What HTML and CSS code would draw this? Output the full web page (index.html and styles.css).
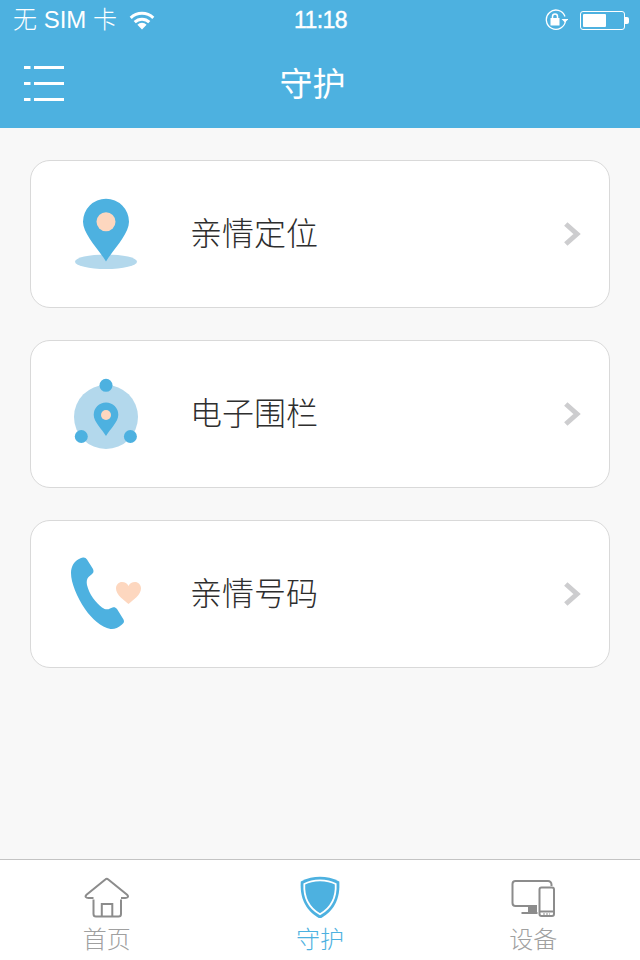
FILE: index.html
```html
<!DOCTYPE html>
<html lang="zh">
<head>
<meta charset="utf-8">
<title>守护</title>
<link rel="stylesheet" href="styles.css">
</head>
<body>
<div class="app">
  <header class="header">
    <div class="status">
      <div class="status-left">
        <span class="carrier">无 SIM 卡</span>
        <svg class="wifi" width="26" height="20" viewBox="130 10 26 20"><path d="M131.700 17.800a16.500 16.500 0 0 1 22.600 0" class="wifi-arc"/><path d="M135.700 22.200a10.500 10.500 0 0 1 14.600 0" class="wifi-arc"/><path d="M143 29.500l-4.600-4.800a6.500 6.500 0 0 1 9.200 0z" class="wifi-dot"/></svg>
      </div>
      <span class="time">11:18</span>
      <div class="status-right">
        <svg class="rot" width="24" height="22" viewBox="544 9 24 22"><path d="M565 16.500a9.600 9.600 0 1 0 .5 4" class="rot-arc"/><path d="M561.500 19h7l-3.500 3.500z" class="rot-fill"/><rect x="550.500" y="18" width="9" height="7.500" class="rot-fill"/><path d="M552.500 18.500v-2a2.500 2.500 0 0 1 5 0v2" class="rot-lock"/></svg>
        <div class="battery"><div class="battery-body"><div class="battery-fill"></div></div><div class="battery-nub"></div></div>
      </div>
    </div>
    <nav class="nav">
      <svg class="menu" width="40" height="35" viewBox="24 66 40 35"><rect x="24" y="66" width="6.500" height="3"/><rect x="34" y="66" width="30" height="3"/><rect x="24" y="82" width="6.500" height="3"/><rect x="34" y="82" width="30" height="3"/><rect x="24" y="98" width="6.500" height="3"/><rect x="34" y="98" width="30" height="3"/></svg>
      <h1 class="title">守护</h1>
    </nav>
  </header>

  <main class="list">
    <a class="card">
      <svg class="card-icon" width="90" height="146" viewBox="60 161 90 146">
        <ellipse cx="106" cy="261.700" rx="31" ry="7.300" class="c-pale"/>
        <path d="M106 261.500C99 250 83 234 83 221.800a23 23 0 0 1 46 0C129 234 113 250 106 261.500z" class="c-blue"/>
        <circle cx="106" cy="221.800" r="9.500" class="c-peach"/>
      </svg>
      <span class="card-label">亲情定位</span>
      <svg class="chev" width="18" height="26" viewBox="0 0 18 26"><path d="M2.800 3L14 13 2.800 23"/></svg>
    </a>
    <a class="card">
      <svg class="card-icon" width="90" height="146" viewBox="60 341 90 146">
        <circle cx="106" cy="417" r="32" class="c-pale"/>
        <circle cx="106" cy="385.300" r="6.500" class="c-blue"/>
        <circle cx="81.300" cy="436.500" r="6.500" class="c-blue"/>
        <circle cx="130.400" cy="436.500" r="6.500" class="c-blue"/>
        <path d="M106 436C102 429 93.700 422 93.700 414.700a12.300 12.300 0 0 1 24.600 0C118.300 422 110 429 106 436z" class="c-blue"/>
        <circle cx="106" cy="415" r="5" class="c-peach"/>
      </svg>
      <span class="card-label">电子围栏</span>
      <svg class="chev" width="18" height="26" viewBox="0 0 18 26"><path d="M2.800 3L14 13 2.800 23"/></svg>
    </a>
    <a class="card">
      <svg class="card-icon" width="90" height="146" viewBox="60 521 90 146">
        <path d="M80 558.500C84 556.500 85.500 557.500 87 559.500L93 569C94 571.500 93.500 573 91.500 574.500L88.500 577C86.500 579 86.500 582 87 585C89 594 96 603 102 607.500C105 609.500 107.500 610 110 608.500L112.500 607.500C114.500 607 115.500 607.500 117 609L123.500 619.500C124.500 621.500 124 623 122 624.500C118 628 114 629.500 110.500 629C101 627 92 619 85 609C77 597 71 583 71 573C71 566 74.500 561 80 558.500z" class="c-blue"/>
        <path d="M128.500 604C124 600 116 595 116 588.500C116 584.500 119 582 122 582C125 582 127.300 583.500 128.500 586C129.700 583.500 132 582 135 582C138 582 141 584.500 141 588.500C141 595 133 600 128.500 604z" class="c-peach"/>
      </svg>
      <span class="card-label">亲情号码</span>
      <svg class="chev" width="18" height="26" viewBox="0 0 18 26"><path d="M2.800 3L14 13 2.800 23"/></svg>
    </a>
  </main>

  <footer class="tabs">
    <a class="tab">
      <svg class="tab-icon" width="46" height="42" viewBox="84 876 46 42">
        <path d="M93.500 899.500V914a2.500 2.500 0 0 0 2.500 2.500h22.500a2.500 2.500 0 0 0 2.500-2.500V899.500M93.500 898H88.500c-2.800 0-3.800-1.500-2-3.300L105.300 879.500a2.200 2.200 0 0 1 3 0l18.800 15.200c1.800 1.800.8 3.300-2 3.300H121M101.800 916.500V904h10.500v12.500" class="t-line"/>
      </svg>
      <span class="tab-label">首页</span>
    </a>
    <a class="tab tab-on">
      <svg class="tab-icon" width="42" height="42" viewBox="299 876 42 42">
        <path d="M320 876.700C326 876.700 333 878 339.300 881.500C340 893 338 909 320 918.700C302 909 300 893 300.800 881.500C307 878 314 876.700 320 876.700z" class="c-blue"/>
        <path d="M320 880.300C325 880.300 331 881.300 335.700 884C336.200 894 334.500 906 320 914.300C305.500 906 303.800 894 304.300 884C309 881.300 315 880.300 320 880.300z" class="s-white"/>
      </svg>
      <span class="tab-label">守护</span>
    </a>
    <a class="tab">
      <svg class="tab-icon" width="46" height="42" viewBox="510 876 46 42">
        <path d="M537 906H515.500a3 3 0 0 1-3-3V884a3 3 0 0 1 3-3H548a3.500 3.500 0 0 1 3.500 3.500V886" class="t-line"/>
        <rect x="528" y="906.500" width="9" height="6" class="t-fill"/>
        <rect x="521.500" y="912" width="16" height="2" class="t-fill"/>
        <rect x="539.500" y="887.500" width="14.500" height="28.500" rx="2" class="t-line"/>
        <path d="M540 911.500h13" class="t-line"/>
        <path d="M543 914h7" class="t-dots"/>
      </svg>
      <span class="tab-label">设备</span>
    </a>
  </footer>
</div>
</body>
</html>
```

FILE: styles.css
```css
* {
  box-sizing: border-box;
}

html,
body {
  margin: 0;
  padding: 0;
}

body {
  font-family: "Liberation Sans", "Noto Sans CJK SC", sans-serif;
}

.app {
  width: 640px;
  height: 960px;
  display: flex;
  flex-direction: column;
  background: #f8f8f8;
  overflow: hidden;
}

.header {
  height: 128px;
  flex: none;
  background: #4db1e0;
  color: #fff;
}

.status {
  height: 40px;
  padding: 0 11px 0 13px;
  display: grid;
  grid-template-columns: 1fr auto 1fr;
  align-items: center;
}

.status-left {
  display: flex;
  align-items: center;
  gap: 12px;
}

.carrier {
  font-size: 24px;
  line-height: 40px;
  font-weight: 300;
}

.wifi {
  display: block;
}

.wifi-arc {
  fill: none;
  stroke: #fff;
  stroke-width: 3;
}

.wifi-dot {
  fill: #fff;
}

.time {
  font-size: 23px;
  line-height: 40px;
  font-weight: 400;
  -webkit-text-stroke: 0.4px #fff;
  letter-spacing: -0.6px;
  margin-left: -1px;
}

.status-right {
  display: flex;
  align-items: center;
  justify-content: flex-end;
  gap: 12px;
}

.rot {
  display: block;
}

.rot-arc {
  fill: none;
  stroke: #fff;
  stroke-width: 1.300;
}

.rot-fill {
  fill: #fff;
}

.rot-lock {
  fill: none;
  stroke: #fff;
  stroke-width: 1.500;
}

.battery {
  display: flex;
  align-items: center;
}

.battery-body {
  width: 45px;
  height: 19px;
  border: 1px solid #fff;
  border-radius: 3px;
  padding: 2px;
}

.battery-fill {
  width: 23px;
  height: 100%;
  background: #fff;
  border-radius: 1px;
}

.battery-nub {
  width: 4px;
  height: 7px;
  background: #fff;
  border-radius: 0 2px 2px 0;
}

.nav {
  height: 88px;
  padding: 0 15px 4px 0;
  position: relative;
  display: flex;
  align-items: center;
  justify-content: center;
}

.menu {
  position: absolute;
  left: 24px;
  top: 26px;
  fill: #fff;
}

.title {
  margin: 0;
  font-size: 33px;
  font-weight: 400;
  line-height: 84px;
  font-family: "Noto Sans CJK SC", sans-serif;
}

.list {
  flex: 1;
  padding: 32px 30px 0;
  display: flex;
  flex-direction: column;
  gap: 32px;
}

.card {
  height: 148px;
  display: flex;
  align-items: center;
  padding: 0 28px 0 29px;
  background: #fff;
  border: 1px solid #d9d9d9;
  border-radius: 20px;
}

.card-icon {
  flex: none;
  display: block;
}

.card-label {
  flex: 1;
  margin-left: 40px;
  padding-bottom: 6px;
  font-family: "Noto Sans CJK SC", sans-serif;
  font-size: 32px;
  font-weight: 300;
  line-height: 44px;
  color: #2e2e2e;
}

.chev {
  flex: none;
  display: block;
  fill: none;
  stroke: #cdcdcf;
  stroke-width: 5;
}

.c-blue {
  fill: #4db1e0;
}

.c-pale {
  fill: #b3d8ec;
}

.c-peach {
  fill: #fdd7bf;
}

.s-white {
  fill: #4db1e0;
  stroke: #fff;
  stroke-width: 1.800;
}

.tabs {
  flex: none;
  height: 101px;
  display: flex;
  background: #fff;
  border-top: 1px solid #c4c4c4;
}

.tab {
  flex: 1;
  display: flex;
  flex-direction: column;
  align-items: center;
  padding-top: 16px;
  color: #a0a0a0;
}

.tab-on {
  color: #4db1e0;
}

.tab-icon {
  display: block;
  flex: none;
}

.tab-label {
  margin-top: 3px;
  font-family: "Noto Sans CJK SC", sans-serif;
  font-size: 24px;
  font-weight: 300;
  line-height: 34px;
}

.t-line {
  fill: none;
  stroke: #8c8c8c;
  stroke-width: 2;
}

.t-fill {
  fill: #8c8c8c;
}

.t-dots {
  fill: none;
  stroke: #8c8c8c;
  stroke-width: 1;
  stroke-dasharray: 2 1;
}
```
